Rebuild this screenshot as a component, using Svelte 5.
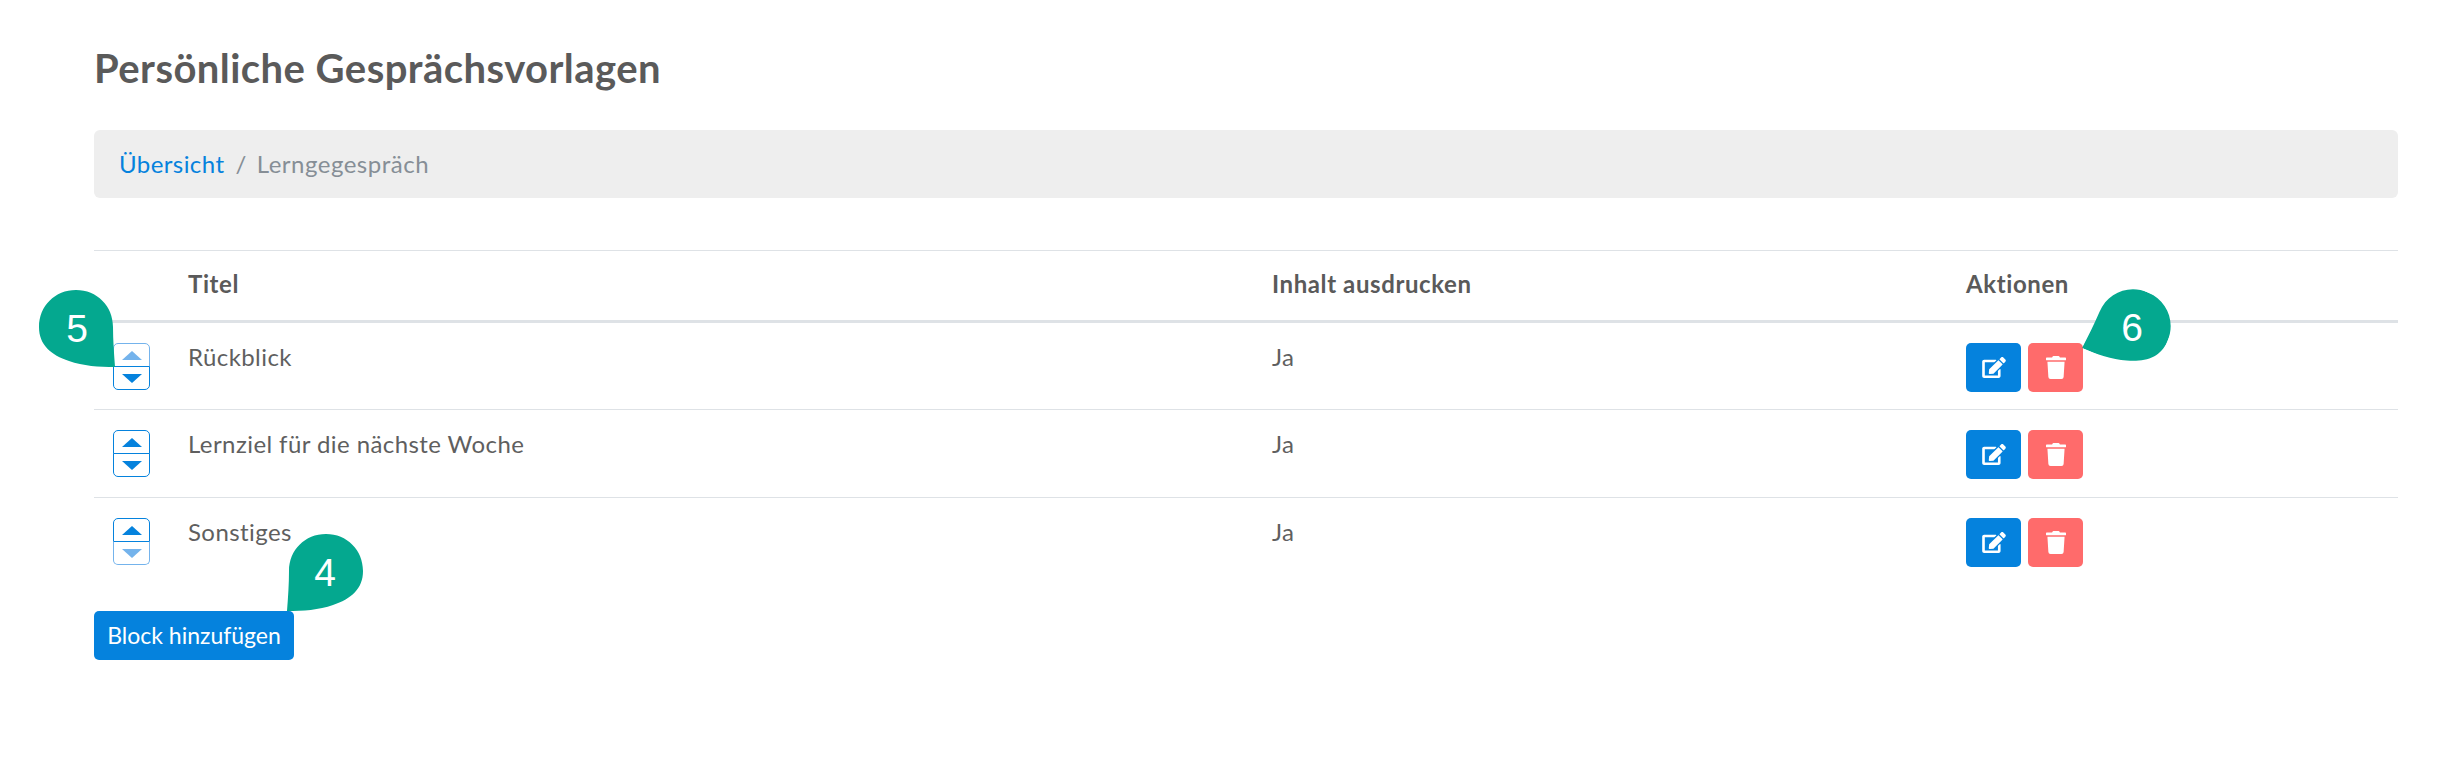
<script>
  const rows = [
    { title: 'Rückblick', print: 'Ja', first: true },
    { title: 'Lernziel für die nächste Woche', print: 'Ja' },
    { title: 'Sonstiges', print: 'Ja', last: true }
  ]

  const drop = 'M37 0C58 0 74 16 74 37C74 50 75 64 76 77C60 77 44 76 30 71C12 65 0 55 0 37C0 16 16 0 37 0Z'
</script>

<div class="page">
  <h1>Persönliche Gesprächsvorlagen</h1>

  <nav class="crumbs">
    <a href="#top">Übersicht</a>
    <span class="sep">/</span>
    <span class="current">Lerngegespräch</span>
  </nav>

  <table>
    <colgroup>
      <col class="c-sort" />
      <col class="c-title" />
      <col class="c-print" />
      <col />
    </colgroup>
    <thead>
      <tr>
        <th></th>
        <th>Titel</th>
        <th>Inhalt ausdrucken</th>
        <th>Aktionen</th>
      </tr>
    </thead>
    <tbody>
      {#each rows as row}
        <tr>
          <td class="sort">
            <div class="sorter">
              <button class="up" class:off={row.first} aria-label="hoch"><span></span></button>
              <button class="down" class:off={row.last} aria-label="runter"><span></span></button>
            </div>
          </td>
          <td>{row.title}</td>
          <td>{row.print}</td>
          <td class="actions">
            <div class="btns">
              <button class="icon edit" aria-label="bearbeiten">
                <svg viewBox="0 0 576 512" width="24" height="21"><path fill="#fff" d="M402.6 83.2l90.2 90.2c3.8 3.8 3.8 10 0 13.8L274.4 405.6l-92.8 10.3c-12.4 1.4-22.9-9.1-21.5-21.5l10.3-92.8L388.8 83.2c3.8-3.8 10-3.8 13.8 0zm162-22.9l-48.8-48.8c-15.2-15.2-39.9-15.2-55.2 0l-35.4 35.4c-3.8 3.8-3.8 10 0 13.8l90.2 90.2c3.8 3.8 10 3.8 13.8 0l35.4-35.4c15.2-15.3 15.2-40 0-55.2zM384 346.2V448H64V128h229.8c3.2 0 6.2-1.3 8.5-3.5l40-40c7.6-7.6 2.2-20.5-8.5-20.5H48C21.5 64 0 85.5 0 112v352c0 26.5 21.5 48 48 48h352c26.5 0 48-21.5 48-48V306.2c0-10.7-12.9-16-20.5-8.5l-40 40c-2.2 2.3-3.5 5.3-3.5 8.5z" /></svg>
              </button>
              <button class="icon del" aria-label="löschen">
                <svg viewBox="0 0 448 512" width="20" height="23"><path fill="#fff" d="M432 32H312l-9.4-18.7A24 24 0 0 0 281.1 0H166.8a23.72 23.72 0 0 0-21.4 13.3L136 32H16A16 16 0 0 0 0 48v32a16 16 0 0 0 16 16h416a16 16 0 0 0 16-16V48a16 16 0 0 0-16-16zM53.2 467a48 48 0 0 0 47.9 45h245.8a48 48 0 0 0 47.9-45L416 128H32z" /></svg>
              </button>
            </div>
          </td>
        </tr>
      {/each}
    </tbody>
  </table>

  <button class="add">Block hinzufügen</button>

  <div class="marker m4"><svg viewBox="0 0 76 77"><path d={drop} /></svg><span>4</span></div>
  <div class="marker m5"><svg viewBox="0 0 76 77"><path d={drop} /></svg><span>5</span></div>
  <div class="marker m6"><svg viewBox="0 0 76 77"><path d={drop} /></svg><span>6</span></div>
</div>

<style>
  :global(body) {
    margin: 0;
    background: #fff;
  }

  .page {
    position: relative;
    height: 758px;
    box-sizing: border-box;
    padding: 46px 54px 0 94px;
    font-family: Lato, sans-serif;
    font-size: 24px;
    line-height: 34px;
    letter-spacing: 0.42px;
    color: #5f5f5f;
  }

  h1 {
    margin: 0 0 40px;
    font-size: 40px;
    line-height: 44px;
    letter-spacing: 0.45px;
    font-weight: 700;
    color: #5a5a5a;
  }

  .crumbs {
    display: flex;
    align-items: center;
    gap: 11px;
    height: 68px;
    padding: 0 25px;
    margin-bottom: 52px;
    background: #eee;
    border-radius: 6px;
  }

  .crumbs a {
    color: #0582dd;
    text-decoration: none;
  }

  .sep,
  .current {
    color: #868e96;
  }

  .current {
    margin-left: -1px;
    letter-spacing: 0.5px;
  }

  table {
    width: 100%;
    table-layout: fixed;
    border-collapse: collapse;
  }

  .c-sort { width: 77px; }
  .c-title { width: 1084px; }
  .c-print { width: 694px; }

  th {
    height: 71px;
    padding: 0 17px 3px;
    box-sizing: border-box;
    text-align: left;
    font-weight: 700;
    letter-spacing: 0.6px;
    color: #5a5a5a;
    border-top: 1px solid #dee2e6;
    border-bottom: 3px solid #dee2e6;
  }

  td {
    height: 88px;
    box-sizing: border-box;
    padding: 17px 17px;
    vertical-align: top;
    border-bottom: 1px solid #dee2e6;
  }

  tbody tr:last-child td {
    border-bottom: 0;
  }

  td.sort,
  td.actions {
    padding-top: 20px;
  }

  td.sort {
    padding-left: 19px;
    padding-right: 0;
  }

  .sorter {
    display: flex;
    flex-direction: column;
    width: 37px;
  }

  .sorter button {
    display: flex;
    align-items: center;
    justify-content: center;
    height: 24px;
    padding: 0;
    background: #fff;
    border: 1px solid #0582dd;
  }

  .sorter .up {
    border-radius: 5px 5px 0 0;
  }

  .sorter .down {
    margin-top: -1px;
    border-radius: 0 0 5px 5px;
  }

  .sorter .off {
    border-color: #74b3ec;
  }

  .sorter .off + .down,
  .sorter .down.off {
    border-top-color: #0582dd;
  }

  .sorter span {
    width: 0;
    height: 0;
    border-left: 10px solid transparent;
    border-right: 10px solid transparent;
  }

  .up span {
    border-bottom: 9px solid #0582dd;
  }

  .down span {
    border-top: 9px solid #0582dd;
  }

  .up.off span {
    border-bottom-color: #74b3ec;
  }

  .down.off span {
    border-top-color: #74b3ec;
  }

  .btns {
    display: flex;
    gap: 7px;
  }

  .icon {
    display: flex;
    align-items: center;
    justify-content: center;
    width: 55px;
    height: 49px;
    padding: 0;
    border: 0;
    border-radius: 5px;
  }

  .edit { background: #0582dd; }
  .del { background: #ff6b6b; }

  .add {
    display: block;
    margin-top: 25px;
    width: 200px;
    height: 49px;
    padding: 0;
    border: 0;
    border-radius: 5px;
    background: #0582dd;
    color: #fff;
    font: inherit;
    font-size: 23px;
    letter-spacing: 0;
  }

  .marker {
    position: absolute;
    display: flex;
    align-items: center;
    justify-content: center;
    width: 76px;
    height: 77px;
    font-family: "Liberation Sans", sans-serif;
    font-size: 39px;
    letter-spacing: 0;
    color: #fff;
  }

  .marker svg {
    position: absolute;
    inset: 0;
    display: block;
    width: 100%;
    height: 100%;
    fill: #04a88f;
  }

  .marker span {
    position: relative;
  }

  .m4 { left: 287px; top: 534px; }
  .m4 svg { transform: scaleX(-1); }

  .m5 { left: 39px; top: 290px; }

  .m6 { left: 2094px; top: 289px; }
  .m6 svg { transform: scaleX(-1) rotate(-23deg); }
</style>
